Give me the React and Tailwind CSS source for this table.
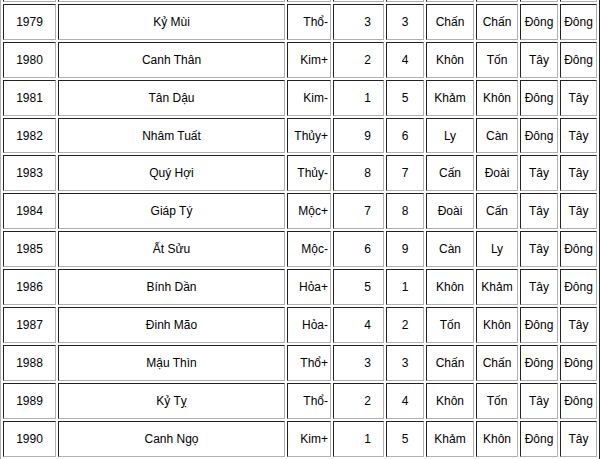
import React from "react";

const blank = ["", "", "", "", "", "", "", "", ""];

const rows = [
  blank,
  ["1979", "Kỷ Mùi", "Thổ-", "3", "3", "Chấn", "Chấn", "Đông", "Đông"],
  ["1980", "Canh Thân", "Kim+", "2", "4", "Khôn", "Tốn", "Tây", "Đông"],
  ["1981", "Tân Dậu", "Kim-", "1", "5", "Khảm", "Khôn", "Đông", "Tây"],
  ["1982", "Nhâm Tuất", "Thủy+", "9", "6", "Ly", "Càn", "Đông", "Tây"],
  ["1983", "Quý Hợi", "Thủy-", "8", "7", "Cấn", "Đoài", "Tây", "Tây"],
  ["1984", "Giáp Tý", "Mộc+", "7", "8", "Đoài", "Cấn", "Tây", "Tây"],
  ["1985", "Ất Sửu", "Mộc-", "6", "9", "Càn", "Ly", "Tây", "Đông"],
  ["1986", "Bính Dần", "Hỏa+", "5", "1", "Khôn", "Khảm", "Tây", "Đông"],
  ["1987", "Đinh Mão", "Hỏa-", "4", "2", "Tốn", "Khôn", "Đông", "Tây"],
  ["1988", "Mậu Thìn", "Thổ+", "3", "3", "Chấn", "Chấn", "Đông", "Đông"],
  ["1989", "Kỷ Tỵ", "Thổ-", "2", "4", "Khôn", "Tốn", "Tây", "Đông"],
  ["1990", "Canh Ngọ", "Kim+", "1", "5", "Khảm", "Khôn", "Đông", "Tây"],
  blank,
];

const align = [
  "text-center",
  "text-center",
  "text-right pr-[2px]",
  "text-center pl-[18px]",
  "text-center",
  "text-center",
  "text-center",
  "text-center",
  "text-center",
];

export default function App() {
  return (
    <div className="w-[600px] h-[459px] overflow-hidden bg-white">
      <table
        className="table-fixed w-[600px] border-separate border-spacing-[2px] border border-t-[#b0b0b0] border-l-[#b0b0b0] border-b-[#222] border-r-[#222] mt-[-37px] text-[12px] text-black"
        style={{ fontFamily: '"Liberation Sans", Arial, sans-serif' }}
      >
        <colgroup>
          <col className="w-[53px]" />
          <col className="w-[227px]" />
          <col className="w-[44px]" />
          <col className="w-[51px]" />
          <col className="w-[38px]" />
          <col className="w-[48px]" />
          <col className="w-[42px]" />
          <col className="w-[38px]" />
          <col className="w-[37px]" />
        </colgroup>
        <tbody>
          {rows.map((r, ri) => (
            <tr key={ri}>
              {r.map((c, i) => (
                <td
                  key={i}
                  className={`h-[35.9px] p-0 ${align[i]} align-middle whitespace-nowrap border border-t-[#222] border-l-[#222] border-b-[#b0b0b0] border-r-[#b0b0b0]`}
                >
                  {c}
                </td>
              ))}
            </tr>
          ))}
        </tbody>
      </table>
    </div>
  );
}
